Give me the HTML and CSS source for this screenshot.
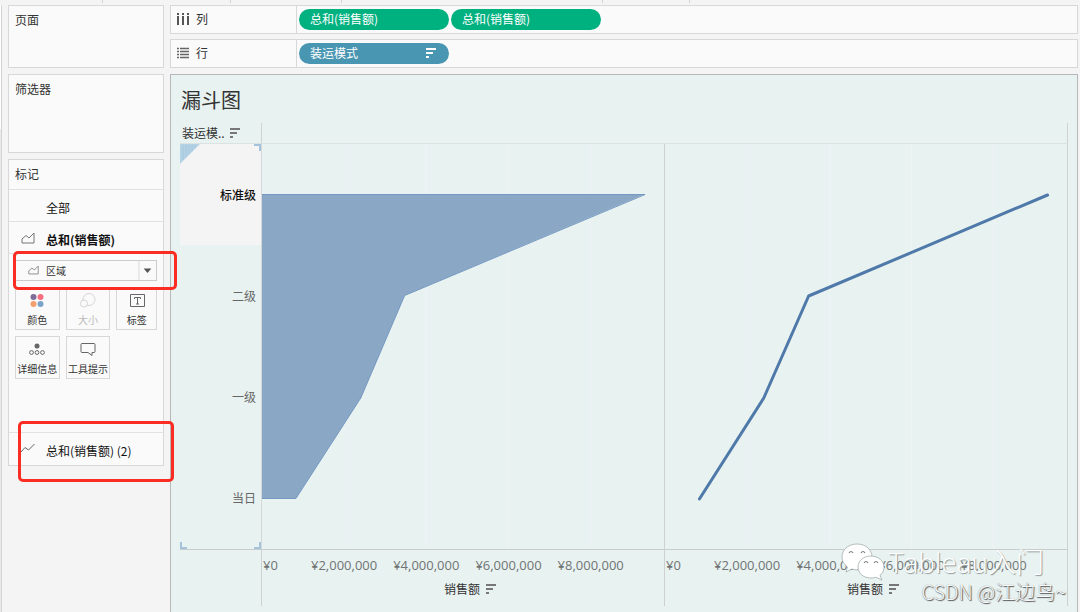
FILE: index.html
```
<!DOCTYPE html>
<html lang="zh-CN">
<head>
<meta charset="utf-8">
<title>漏斗图</title>
<link rel="stylesheet" href="styles.css">
</head>
<body>
<svg width="0" height="0" class="defs" aria-hidden="true">
  <symbol id="sort" viewBox="0 0 12 10"><path d="M1 1h10M1 5h7M1 9h3" stroke="currentColor" stroke-width="2" fill="none"/></symbol>
  <symbol id="area" viewBox="0 0 14 12"><path d="M1 11V7L5 3.500L8 6L13 1V11Z" stroke="currentColor" fill="none"/></symbol>
</svg>
<div class="page">
  <div class="toolbar-edge"><i></i><i></i><i></i><i></i><i></i></div>
  <div class="left-edge"></div>
  <aside class="shelves">
    <section class="card pages"><h2>页面</h2></section>
    <section class="card filters"><h2>筛选器</h2></section>
    <section class="card marks">
      <h2>标记</h2>
      <button class="mark-row">全部</button>
      <button class="mark-row active"><svg class="mark-icon"><use href="#area"/></svg>总和(销售额)</button>
      <div class="mark-body">
        <div class="type-picker">
          <svg class="type-icon"><use href="#area"/></svg>
          <select aria-label="标记类型"><option>区域</option></select>
          <svg class="type-arrow" viewBox="0 0 19 20"><path d="M.5 0V20" stroke="#d8d8d8"/><path d="M5.500 8h8L9.500 12.500Z" fill="#555"/></svg>
          <div class="callout callout-type"></div>
        </div>
        <div class="mark-buttons">
          <button><svg viewBox="0 0 24 16"><circle cx="8.500" cy="4" r="3" fill="#7f6b97"/><circle cx="15.500" cy="4" r="3" fill="#f96d80"/><circle cx="8.500" cy="11" r="3" fill="#f3a071"/><circle cx="15.500" cy="11" r="3" fill="#7ca4cb"/></svg>颜色</button>
          <button disabled><svg viewBox="0 0 24 16" fill="none" stroke="#d5d5d5"><circle cx="13" cy="6.500" r="6"/><circle cx="8" cy="10.500" r="3.500" fill="#fafafa"/></svg>大小</button>
          <button><svg viewBox="0 0 24 16" fill="none" stroke="#666"><path d="M5.500 1.500h14v12h-14z"/><path d="M9.500 6V4.500h6V6M12.500 4.500v6.500M11 11h3"/></svg>标签</button>
          <button><svg viewBox="0 0 24 16" fill="none" stroke="#666"><circle cx="12" cy="4" r="2.500" fill="#666" stroke="none"/><circle cx="6.500" cy="10.500" r="1.900"/><circle cx="12" cy="10.500" r="1.900"/><circle cx="17.500" cy="10.500" r="1.900"/></svg>详细信息</button>
          <button><svg viewBox="0 0 24 16" fill="none" stroke="#666"><path d="M6 1.500h12q1 0 1 1v7q0 1-1 1h-2v3l-4-3h-6q-1 0-1-1v-7q0-1 1-1z"/></svg>工具提示</button>
        </div>
      </div>
      <div class="last-row">
        <button class="mark-row"><svg class="mark-icon" viewBox="0 0 14 12" fill="none" stroke="#666"><path d="M0 9L4 4.500L7.500 7L13.500 1"/></svg>总和(销售额) (2)</button>
        <div class="callout callout-second"></div>
      </div>
    </section>
  </aside>
  <main class="sheet">
    <section class="shelf">
      <h2><svg viewBox="0 0 12 12"><path d="M0 1h2M5 1h2M10 1h2" stroke="#555" stroke-width="2"/><path d="M1 3v9M6 3v9M11 3v9" stroke="#555" stroke-width="2"/></svg>列</h2>
      <div class="pills"><button class="pill">总和(销售额)</button><button class="pill">总和(销售额)</button></div>
    </section>
    <section class="shelf">
      <h2><svg viewBox="0 0 12 12"><path d="M0 1.500h2M3 1.500h9M0 4.500h2M3 4.500h9M0 7.500h2M3 7.500h9M0 10.500h2M3 10.500h9" stroke="#666" stroke-width="1.300"/></svg>行</h2>
      <div class="pills"><button class="pill dimension">装运模式<svg class="sort"><use href="#sort"/></svg></button></div>
    </section>
    <section class="viz">
      <h1>漏斗图</h1>
      <div class="chart">
        <div class="field">装运模..<svg class="sort"><use href="#sort"/></svg></div>
        <div class="head"></div><div class="head"></div>
        <div class="categories">
          <div class="selected"><svg class="fold" viewBox="0 0 20 20"><path d="M0 0h20L0 20z" fill="#b5d3e5"/><path d="M3 1v15M6 1v12M9 1v9M12 1v6M15 1v3" stroke="#a3c5dc" stroke-width="1"/></svg>标准级</div>
          <div>二级</div><div>一级</div><div>当日</div>
          <i class="corner top-right"></i><i class="corner bottom-left"></i><i class="corner bottom-right"></i>
        </div>
        <svg class="plot" viewBox="0 0 403 405" preserveAspectRatio="none">
          <path class="grid" d="M82.500 0V405M165 0V405M247 0V405M329.500 0V405"/>
          <path class="area" d="M0 50H384L143 151.500L99 254L34 354.500H0Z"/>
          <path class="area-edge" d="M0 50.500H384L143 151.500L99 254L34 354.500H0"/>
        </svg>
        <svg class="plot" viewBox="0 0 403 405" preserveAspectRatio="none">
          <path class="grid" d="M82.500 0V405M165 0V405M247 0V405M329.500 0V405"/>
          <path class="line" d="M383.500 51L144 152L99 254L34.500 355"/>
        </svg>
        <div class="axis-gap"></div>
        <div class="axis">
          <div class="ticks"><span>¥0</span><span>¥2,000,000</span><span>¥4,000,000</span><span>¥6,000,000</span><span>¥8,000,000</span></div>
          <div class="axis-title">销售额<svg class="sort"><use href="#sort"/></svg></div>
        </div>
        <div class="axis">
          <div class="ticks"><span>¥0</span><span>¥2,000,000</span><span>¥4,000,000</span><span>¥6,000,000</span><span>¥8,000,000</span></div>
          <div class="axis-title">销售额<svg class="sort"><use href="#sort"/></svg></div>
        </div>
      </div>
      <div class="watermark">
        <div class="account">
          <svg viewBox="0 0 44 38"><g fill="#fff" stroke="#9aa5a4" stroke-width=".7"><path d="M16 1C7 1 1 7 1 14c0 4 2 7.500 5.500 10L5 29l6-3c2 .6 3 .8 6 .8C25 27 31 21 31 14S25 1 16 1Z"/><path d="M30 13c-8 0-13 5-13 11s5 11 13 11c2 0 4-.4 5-.8l6 3-2-5c3-2 4-5 4-8.200C43 18 37 13 30 13Z"/></g><g fill="none" stroke="#777f7e" stroke-width="1.200"><path d="M8 10q2-3 4 0M20 10q2-3 4 0M23 20q2-3 4 0M33 20q2-3 4 0"/></g></svg>
          <span>Tableau入门</span>
        </div>
        <div class="author">CSDN @江边鸟~</div>
      </div>
    </section>
  </main>
</div>
</body>
</html>
```
FILE: styles.css
```
* { box-sizing: border-box; }
body {
  margin: 0;
  background: #f4f4f4;
  color: #333;
  font: 12px/18px "Noto Sans CJK SC", "Noto Sans", sans-serif;
  overflow: hidden;
}
h1, h2 { margin: 0; font-weight: 400; }
h2 { font-size: 12px; }
button, select { font: inherit; color: inherit; border: 0; background: none; padding: 0; border-radius: 0; }
.defs { position: absolute; }
.page {
  display: grid;
  grid-template: 5px minmax(0, 1fr) / 8px 156px minmax(0, 1fr);
  min-height: 100vh;
  padding-right: 2px;
}
.toolbar-edge {
  grid-column: 1 / -1;
  height: 3px;
  display: grid;
  grid-template-columns: 103px 128px 111px 261px 87px;
}
.toolbar-edge i { border-right: 1px solid #d4d4d4; }
.left-edge {
  width: 2px;
  border-right: 1px solid #d4d4d4;
  background: linear-gradient(#fff 124px, #e9e9e9 124px);
}
.shelves { display: flex; flex-direction: column; gap: 6px; }
.card { border: 1px solid #d8d8d8; background: #fafafa; }
.card h2 { padding: 5px 6px; }
.pages { height: 63px; }
.filters { height: 79px; }
.marks h2 { height: 30px; border-bottom: 1px solid #e2e2e2; }
.mark-row {
  display: flex;
  align-items: center;
  position: relative;
  width: 100%;
  height: 32px;
  padding: 4px 0 0 37px;
  color: #111;
  text-align: left;
  border-bottom: 1px solid #e2e2e2;
}
.mark-row.active { font-weight: 700; }
.mark-icon { position: absolute; left: 12px; top: 10px; width: 14px; height: 12px; color: #777; }
.mark-body { height: 178px; padding: 6px 6px 0; }
.type-picker { position: relative; height: 21px; margin-bottom: 6px; }
.type-picker select {
  appearance: none;
  width: 100%;
  height: 21px;
  padding-left: 30px;
  font-size: 10px;
  border: 1px solid #ccc;
  background: #fafafa;
}
.type-icon { position: absolute; left: 13px; top: 5px; width: 11px; height: 10px; color: #777; }
.type-arrow { position: absolute; right: 0; top: 1px; width: 19px; height: 19px; }
.callout { position: absolute; z-index: 2; border: 3px solid #fb2c21; border-radius: 5px; pointer-events: none; }
.callout-type { inset: -9px -20px -9px -2px; }
.callout-second { inset: -12px -11px -17px 9px; }
.mark-buttons { display: grid; grid-template-columns: 45fr 45fr 41fr; grid-auto-rows: 43px; gap: 6px; }
.mark-buttons button {
  display: flex;
  flex-direction: column;
  align-items: center;
  gap: 3px;
  padding-top: 5px;
  border: 1px solid #d8d8d8;
  font-size: 10px;
  line-height: 16px;
  white-space: nowrap;
}
.mark-buttons button:disabled { color: #bbb; }
.mark-buttons svg { width: 24px; height: 16px; flex: none; }
.last-row { position: relative; border-top: 1px solid #e2e2e2; }
.last-row .mark-row { border: 0; }

.sheet { display: flex; flex-direction: column; gap: 5px; padding-left: 6px; min-width: 0; }
.shelf {
  display: grid;
  grid-template-columns: 126px minmax(0, 1fr);
  height: 29px;
  flex: none;
  border: 1px solid #d8d8d8;
  background: #fafafa;
}
.shelf h2 { display: flex; align-items: center; gap: 7px; padding: 0 0 2px 6px; border-right: 1px solid #d8d8d8; }
.shelf h2 svg { width: 12px; height: 12px; }
.pills { display: flex; align-items: center; gap: 2px; padding-left: 2px; }
.pill {
  display: flex;
  align-items: center;
  justify-content: space-between;
  width: 150px;
  height: 21px;
  padding: 0 12px 2px 11px;
  border-radius: 11px;
  background: #00b180;
  color: #fff;
}
.pill.dimension { background: #4996b2; }
.sort { width: 12px; height: 10px; flex: none; }

.viz {
  position: relative;
  flex: 1;
  display: flex;
  flex-direction: column;
  margin-top: 1px;
  padding: 0 9px 6px;
  border: 1px solid #b8b8b8;
  border-bottom: 0;
  background: #e8f2f1;
}
.viz h1 { height: 48px; padding: 9px 0 0 1px; font-size: 20px; line-height: 32px; }
.chart { flex: 1; display: grid; grid-template: 21px minmax(0, 1fr) 56px / 82px minmax(0, 1fr) minmax(0, 1fr); }
.field { display: flex; align-items: center; gap: 4px; padding-left: 2px; border-right: 1px solid #cfd3d3; border-bottom: 1px solid #dce1e1; }
.field .sort, .axis .sort { color: #777; }
.head { border-bottom: 1px solid #dce1e1; }
.head + .head { border-right: 1px solid #d0cfd2; }
.categories {
  position: relative;
  display: grid;
  grid-template-rows: repeat(4, minmax(0, 1fr));
  border-right: 1px solid #d4d8d8;
  border-bottom: 1px solid #cacccc;
  color: #666;
}
.categories div { position: relative; display: flex; align-items: center; justify-content: flex-end; padding-right: 5px; }
.categories .selected { background: #f4f4f4; color: #111; font-weight: 500; }
.fold { position: absolute; left: 0; top: 0; width: 20px; height: 20px; }
.corner { position: absolute; width: 7px; height: 7px; border: 0 solid #a5c3da; }
.top-right { top: 0; right: 0; border-width: 2px 2px 0 0; }
.bottom-left { bottom: 0; left: 0; border-width: 0 0 2px 2px; }
.bottom-right { bottom: 0; right: 0; border-width: 0 2px 2px 0; }
.plot { display: block; width: 100%; height: 100%; min-width: 0; min-height: 0; border-right: 1px solid #cdd1d1; border-bottom: 1px solid #cacccc; }
.plot path { fill: none; vector-effect: non-scaling-stroke; }
.plot .grid { stroke: #eef3f4; stroke-width: 1px; }
.plot .area { fill: #8aa8c5; }
.plot .area-edge { stroke: #7599c2; stroke-width: 1px; }
.plot .line { stroke: #4e79a9; stroke-width: 3px; stroke-linecap: round; stroke-linejoin: round; }
.axis, .axis-gap { border-right: 1px solid #cdd1d1; }
.ticks {
  display: grid;
  grid-template-columns: minmax(0, 411fr) repeat(4, minmax(0, 824fr)) minmax(0, 323fr);
  padding-top: 6px;
  color: #707474;
  font: 13px/18px "Open Sans", "Noto Sans", sans-serif;
}
.ticks span { display: flex; justify-content: center; }
.ticks span:first-child { justify-content: flex-start; padding-left: 1px; }
.axis-title { display: flex; align-items: center; justify-content: center; gap: 5px; padding: 6px 0 0 15px; }
.watermark { position: absolute; z-index: 1; right: 11px; bottom: 9px; color: #fff; white-space: nowrap; }
.account { display: flex; align-items: center; justify-content: flex-end; gap: 4px; padding-right: 22px; font: 300 28px/38px "Open Sans", "Noto Sans CJK SC", sans-serif; text-shadow: 1px 1px 1px #8d9695; }
.account svg { width: 44px; height: 38px; }
.author { font: 300 20px/22px "Noto Sans CJK SC", sans-serif; color: #f8fafa; text-align: right; text-shadow: 1px 1px 1px #555, 0 0 1px #777; }
```
